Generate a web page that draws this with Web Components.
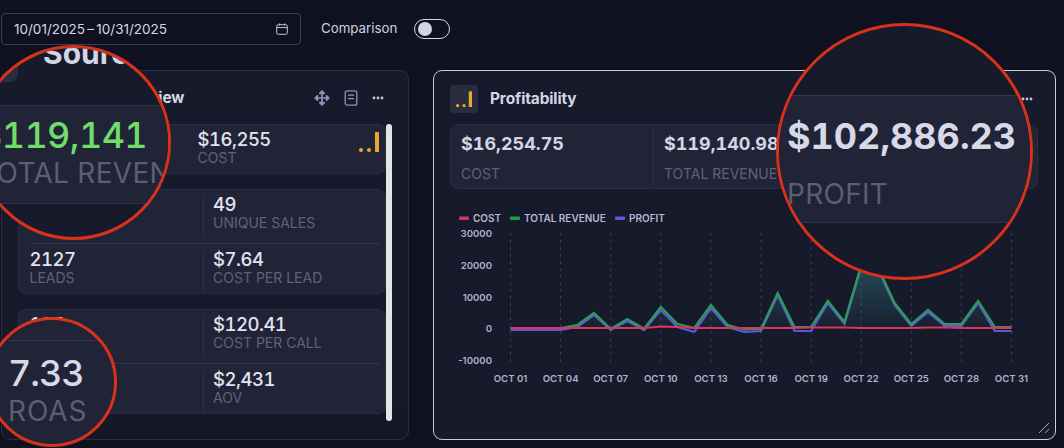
<!DOCTYPE html>
<html lang="en"><head><meta charset="utf-8"><title>Dashboard</title>
<style>
html,body{margin:0;padding:0;height:448px;overflow:hidden;background:#0f1120;color:#e0e2ee;font-family:Inter,"Liberation Sans",sans-serif}
</style></head><body>
<dash-page>
  <tool-bar slot="bar">
    <date-range>10/01/2025 – 10/31/2025</date-range>
    <toggle-switch>Comparison</toggle-switch>
  </tool-bar>
  <panel-card slot="left" heading="Source Overview">
    <metric-group>
      <metric-row first cols="168">
        <metric-cell></metric-cell>
        <metric-cell value="$16,255" label="COST" plain></metric-cell>
        <bars-icon slot="end"></bars-icon>
      </metric-row>
    </metric-group>
    <metric-group>
      <metric-row first><metric-cell></metric-cell><metric-cell divided value="49" label="UNIQUE SALES"></metric-cell></metric-row>
      <metric-row><metric-cell value="2127" label="LEADS"></metric-cell><metric-cell divided value="$7.64" label="COST PER LEAD"></metric-cell></metric-row>
    </metric-group>
    <metric-group>
      <metric-row first><metric-cell value="135"></metric-cell><metric-cell divided value="$120.41" label="COST PER CALL"></metric-cell></metric-row>
      <metric-row><metric-cell></metric-cell><metric-cell divided value="$2,431" label="AOV"></metric-cell></metric-row>
    </metric-group>
  </panel-card>
  <profit-panel slot="right"></profit-panel>
</dash-page>
<lens-one></lens-one>
<lens-two></lens-two>
<lens-three></lens-three>
<script>
function def(name, css, html, init){
  customElements.define(name, class extends HTMLElement{
    connectedCallback(){
      if(this.shadowRoot) return;
      const r=this.attachShadow({mode:'open'});
      const a=n=>this.getAttribute(n)??'';
      r.innerHTML='<style>'+css+'</style>'+(typeof html==='function'?html(a,this):html);
      if(init) init(r,this);
    }
  });
}
const barsSvg=`<svg viewBox="0 0 20 20" width="20" height="20" fill="#e9a92f"><circle cx="2" cy="18" r="2"/><circle cx="10" cy="18" r="2"/><rect x="16" width="4" height="20" rx="1"/></svg>`;
const dots=`<svg viewBox="0 0 12 4" width="12" height="4" fill="currentColor"><circle cx="2" cy="2" r="1.4"/><circle cx="6" cy="2" r="1.4"/><circle cx="10" cy="2" r="1.4"/></svg>`;
const moveIc=`<svg viewBox="0 0 16 16" width="16" height="16" fill="none" stroke="currentColor" stroke-width="1.7" stroke-linejoin="round"><path d="M8 1v14M1 8h14"/><path d="M5.8 3.4 8 1.2l2.2 2.2zM5.8 12.6 8 14.8l2.2-2.2zM3.4 5.8 1.2 8l2.2 2.2zM12.6 5.8 14.8 8l-2.2 2.2z" fill="currentColor"/></svg>`;
const docIc=`<svg viewBox="0 0 14 16" width="14" height="16" fill="none" stroke="currentColor" stroke-width="1.3"><rect x="1.2" y=".8" width="11.6" height="14.4" rx="2"/><path d="M4 5.2h6M4 8.6h6"/></svg>`;
const calIc=`<svg viewBox="0 0 12 12" width="12" height="12" fill="none" stroke="currentColor" stroke-width="1"><rect x=".7" y="1.7" width="10.6" height="9.6" rx="1.6"/><path d="M.7 4.6h10.6M3.4.4v2.2M8.6.4v2.2"/></svg>`;

def('dash-page',`:host{display:block;width:1064px;height:448px;box-sizing:border-box;padding:13px 8px 0 1px}
.grid{display:grid;grid-template-columns:408px 623px;column-gap:24px;margin-top:25.5px}`,
`<slot name="bar"></slot><div class="grid"><slot name="left"></slot><slot name="right"></slot></div>`);

def('tool-bar',`:host{display:flex;align-items:center;gap:20px;height:31.5px}`,`<slot></slot>`);

def('date-range',`:host{display:flex;align-items:center;justify-content:space-between;box-sizing:border-box;width:300px;height:31.5px;padding:0 12px 0 12px;border:1px solid #3b3e50;border-radius:4px;font-size:13.5px;letter-spacing:0;word-spacing:-1.5px;color:#d6d7e4}
svg{display:block}.i{color:#c4c6d4;display:flex}`,`<span><slot></slot></span><span class="i">${calIc}</span>`);

def('toggle-switch',`:host{display:flex;align-items:center;gap:17px;font-size:13.3px;color:#d0d1de;margin-top:-1px}
.t{box-sizing:border-box;width:36px;height:20px;border:1.5px solid #d8d9e4;border-radius:10px;padding:2px 3px;margin-top:1px}
.k{width:14px;height:14px;border-radius:50%;background:#d3d4e6}`,`<span><slot></slot></span><div class="t"><div class="k"></div></div>`);

def('panel-card',`:host{display:block;box-sizing:border-box;width:408px;height:370px;border:1px solid #2a2d40;border-radius:9px;background:linear-gradient(#171a2a 70%,#141726);padding:0 16px 0 16px;position:relative}
header{display:flex;align-items:center;height:53px;padding-left:39px;justify-content:space-between}
h2{margin:0;font-size:15.4px;font-weight:700;color:#d4d5e4;letter-spacing:-.1px}
.ic{display:flex;align-items:center;gap:14px;color:#8f92bd;margin-right:8px}
.ic span{display:flex}.ic .d{color:#c4c6d8}
.body{display:grid;gap:15.5px;grid-template-columns:368px;position:relative}
.sb{position:absolute;left:368px;top:0;width:6px;height:297px;border-radius:3px;background:#e3e5e5}`,
a=>`<header><h2>${a('heading')}</h2><div class="ic"><span>${moveIc}</span><span>${docIc}</span><span class="d">${dots}</span></div></header><div class="body"><slot></slot><div class="sb"></div></div>`);

def('metric-group',`:host{display:block;box-sizing:border-box;width:368px;border:1px solid #2b2e42;border-radius:8px;background:#212436;padding:0 1px 0 10.5px}`,`<slot></slot>`);

def('metric-row',`:host{display:grid;grid-template-columns:var(--c,173.5px) 1fr auto;align-items:stretch;height:50px;margin-right:4px;border-top:1px solid #33364a;box-sizing:border-box;--pt:4.5px;--dt:9.5px;--dh:39px}
:host([first]){border-top:0;height:52.5px;--pt:3px;--dt:6px;--dh:40px}
:host([cols]){height:47.5px;margin-right:5px}`,`<slot></slot><slot name="end"></slot>`,
(r,el)=>{const c=el.getAttribute('cols'); if(c) el.style.setProperty('--c',c+'px');});

def('metric-cell',`:host{display:block;box-sizing:border-box;padding:var(--pt,3px) 0 0 0;min-width:0}
:host([divided]){padding-left:10px;background:linear-gradient(#2f3246,#2f3246) no-repeat left 0 top var(--dt)/1px var(--dh)}
.v{font-size:18.5px;line-height:22px;font-weight:500;color:#e2e4f0;letter-spacing:-.5px;font-variant-numeric:tabular-nums}
.l{font-size:14px;line-height:16px;color:#5f6276;white-space:nowrap}`,
a=>`<div class="v">${a('value')}</div><div class="l">${a('label')}</div>`);

def('bars-icon',`:host{display:block;padding:7px 0 0 0}svg{display:block}`,barsSvg);

def('profit-chart',`:host{display:block;height:180px}svg{display:block;font-family:Inter,"Liberation Sans",sans-serif}`,
()=>{
 const x=d=>510.5+16.7*d;
 const rev=[328,328,328,328,325,313,329,319,328.6,307,324,328,305,325,329.5,329,293,327,327,301,322,265,267,303,324,310,324,324,301,327,327];
 const pro=[330,330,330,330,327,315,330,321,330,310,327,332,308,327,332,331,295,331,331,303,324,267,269,305,326,312,326,326,303,331,331];
 const cost=[328,328,328,328,328,328,328,328,328,326.5,327,328,328,328,328,328,328,328,327.5,327.5,327.5,328,328,328,328,327.5,327.5,328,328,328,328];
 const pts=a=>a.map((y,i)=>x(i).toFixed(1)+','+y).join(' ');
 let g='';
 for(let d=0;d<=30;d+=3) g+=`<line x1="${x(d)}" x2="${x(d)}" y1="233" y2="362" stroke="#3b3e50" stroke-dasharray="3 4"/>`;
 const labs=['01','04','07','10','13','16','19','22','25','28','31'];
 let tx=labs.map((l,i)=>`<text x="${x(i*3)}" y="381.5" text-anchor="middle">OCT ${l}</text>`).join('');
 const ys=[[30000,236.5],[20000,268.5],[10000,300.5],[0,332],[-10000,364]];
 tx+=ys.map(([v,y])=>`<text x="492" y="${y}" text-anchor="end">${v}</text>`).join('');
 return `<svg width="600" height="180" viewBox="445 210 600 180">
 <defs><linearGradient id="f" x1="0" y1="0" x2="0" y2="1"><stop offset="0" stop-color="#2d7f7f" stop-opacity=".5"/><stop offset="1" stop-color="#2d7f7f" stop-opacity=".04"/></linearGradient></defs>
 <g font-size="10" font-weight="600" fill="#b6b7d2">
  <rect x="459" y="216.5" width="10" height="3.5" rx="1" fill="#d8365f"/><text x="473" y="221.5">COST</text>
  <rect x="510" y="216.5" width="10" height="3.5" rx="1" fill="#1f9c45"/><text x="524" y="221.5">TOTAL REVENUE</text>
  <rect x="615" y="216.5" width="10" height="3.5" rx="1" fill="#5e58e0"/><text x="629" y="221.5">PROFIT</text>
 </g>
 ${g}
 <polygon points="${x(0)},328 ${pts(rev)} ${x(30)},328" fill="url(#f)"/>
 <polyline points="${pts(pro)}" fill="none" stroke="#5e58d8" stroke-width="2.2"/>
 <polyline points="${pts(rev)}" fill="none" stroke="#2a9d56" stroke-width="2.2"/>
 <polyline points="${pts(cost)}" fill="none" stroke="#d9355f" stroke-width="2.2"/>
 <g font-size="9.6" font-weight="600" fill="#b0b1ca">${tx}</g>
 </svg>`;
});

def('profit-panel',`:host{display:block;box-sizing:border-box;width:623px;height:370px;border:1px solid #c9cbd6;border-radius:9px;background:#171a2a;padding:14px 17px 0 16px;position:relative}
header{display:flex;align-items:center;gap:12px;height:28px}
.box{width:28px;height:28px;border-radius:4px;background:#2a2d3d;display:flex;align-items:center;justify-content:center}
.box svg{width:16px;height:16.5px;display:block}
h2{margin:-2px 0 0;font-size:15.4px;font-weight:700;color:#d4d5e4;letter-spacing:-.1px;flex:1}
.d{color:#c4c6d8;display:flex;margin-right:5px}
.stats{display:grid;grid-template-columns:202px 204px 1fr;box-sizing:border-box;height:64.5px;margin-top:11px;border:1px solid #2b2e42;border-radius:8px;background:#212436}
.c{padding:5px 0 0 10px;margin:3px 0;}
.c+.c{border-left:1px solid #2f3246}
.c .v{font-size:18px;line-height:22px;font-weight:700;color:#d4d5e4;white-space:nowrap;font-variant-numeric:tabular-nums}
.c .l{font-size:14px;line-height:16px;color:#5f6276;margin-top:11px;white-space:nowrap}
.chart{margin:21.5px 0 0 -5px}
.h{position:absolute;right:5px;bottom:5px;display:block}`,
`<header><div class="box">${barsSvg}</div><h2>Profitability</h2><span class="d">${dots}</span></header>
<div class="stats"><div class="c"><div class="v">$16,254.75</div><div class="l">COST</div></div><div class="c"><div class="v">$119,140.98</div><div class="l">TOTAL REVENUE</div></div><div class="c"></div></div>
<div class="chart"><profit-chart></profit-chart></div>
<svg class="h" width="12" height="12" viewBox="0 0 12 12" stroke="#a6a8b6" fill="none"><path d="M1 11 11 1M7 11l4-4"/></svg>`);

const lensBase=(l,t,d,bg)=>`:host{position:absolute;left:${l}px;top:${t}px;width:${d}px;height:${d}px;box-sizing:border-box;border:3px solid #d9321a;border-radius:50%;overflow:hidden;background:${bg};display:block;z-index:5}
.v{font-size:36px;line-height:44px;font-weight:700;white-space:nowrap;color:#d8d9e8;font-variant-numeric:tabular-nums}
.l{font-size:28px;line-height:32px;color:#5c5f73;white-space:nowrap;letter-spacing:.3px}`;

def('lens-one',lensBase(-24,45,195,'#171a2a')+`
.top{display:flex;align-items:center;margin:-22px 0 0 -17px}
.box{width:56px;height:56px;flex:none;border-radius:8px;background:#2a2d3d}
h2{margin:-3px 0 0 25px;font-size:30px;line-height:56px;font-weight:700;color:#d4d5e4;white-space:nowrap}
.bar{margin-top:23px;height:99px;box-sizing:border-box;background:#212436;border:solid #2f3246;border-width:1px 0;padding:7px 0 0 0}
.g{color:#70dd6a;font-weight:500;letter-spacing:-.6px}`,
`<div class="top"><div class="box"></div><h2>Source</h2></div><div class="bar"><div class="v g">$119,141</div><div class="l">TOTAL REVENUE</div></div>`);

def('lens-two',lensBase(-13,317,130,'#212436')+`
.ln{height:1px;background:#33364a;margin:20px 0 0 18px}
.c{padding:10px 0 0 18px}.v{font-weight:500;line-height:44px;letter-spacing:-1px}.l{letter-spacing:.9px}`,
`<div class="ln"></div><div class="c"><div class="v">7.33</div><div class="l">ROAS</div></div>`);

def('lens-three',lensBase(776,23,257,'#171a2a')+`
.bar{margin-top:69px;height:128px;box-sizing:border-box;background:#212436;border:solid #33364a;border-width:1px 0;padding:18px 0 0 8px}
.v{color:#d8d9e8}.l{margin-top:20px}`,
`<div class="bar"><div class="v">$102,886.23</div><div class="l">PROFIT</div></div>`);
</script>
</body></html>
